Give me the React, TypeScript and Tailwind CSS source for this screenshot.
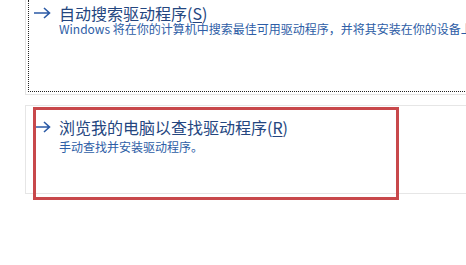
import React from 'react'

const font = { fontFamily: '"Microsoft YaHei", "Noto Sans CJK SC", "Noto Sans", sans-serif' }

function Arrow() {
  return (
    <svg width="18" height="12" viewBox="0 0 18 12" className="shrink-0">
      <path d="M1 6h15.5M11 1l5.5 5-5.5 5" fill="none" stroke="#2b5aa5" strokeWidth="1.6" />
    </svg>
  )
}

export default function App() {
  return (
    <div className="relative w-[466px] h-[265px] bg-white overflow-hidden pl-[25px]" style={font}>
      {/* first command link, focused (dotted rect) */}
      <div className="w-[470px] h-[95px] border-l border-b border-[#e3e3e3] pl-[2px] pb-[2px]">
        <div className="h-full border-l border-b border-dotted border-[#222] pl-[4px] pt-[4px]">
          <div className="flex items-start gap-[8px]">
            <div className="h-[18px] flex items-center"><Arrow /></div>
            <div className="whitespace-nowrap">
              <div className="text-[16px] leading-[18px] text-[#24467f]">
                自动搜索驱动程序(<span className="underline underline-offset-2">S</span>)
              </div>
              <div className="text-[12px] leading-[14px] text-[#2d5da6]">
                Windows 将在你的计算机中搜索最佳可用驱动程序，并将其安装在你的设备上。
              </div>
            </div>
          </div>
        </div>
      </div>

      {/* second command link */}
      <div className="mt-[10px] w-[470px] h-[89px] border-l border-t border-b border-[#e6e6e6] pl-[7px] pt-[12px]">
        <div className="flex items-start gap-[8px]">
          <div className="h-[18px] flex items-center"><Arrow /></div>
          <div className="whitespace-nowrap">
            <div className="text-[16px] leading-[18px] text-[#24467f]">
              浏览我的电脑以查找驱动程序(<span className="underline underline-offset-2">R</span>)
            </div>
            <div className="mt-[4px] text-[12px] leading-[14px] text-[#2d5da6]">手动查找并安装驱动程序。</div>
          </div>
        </div>
      </div>

      {/* red annotation */}
      <div className="absolute left-[33px] top-[107px] w-[366px] h-[93px] border-[3px] border-[#c8484b]" />
    </div>
  )
}
